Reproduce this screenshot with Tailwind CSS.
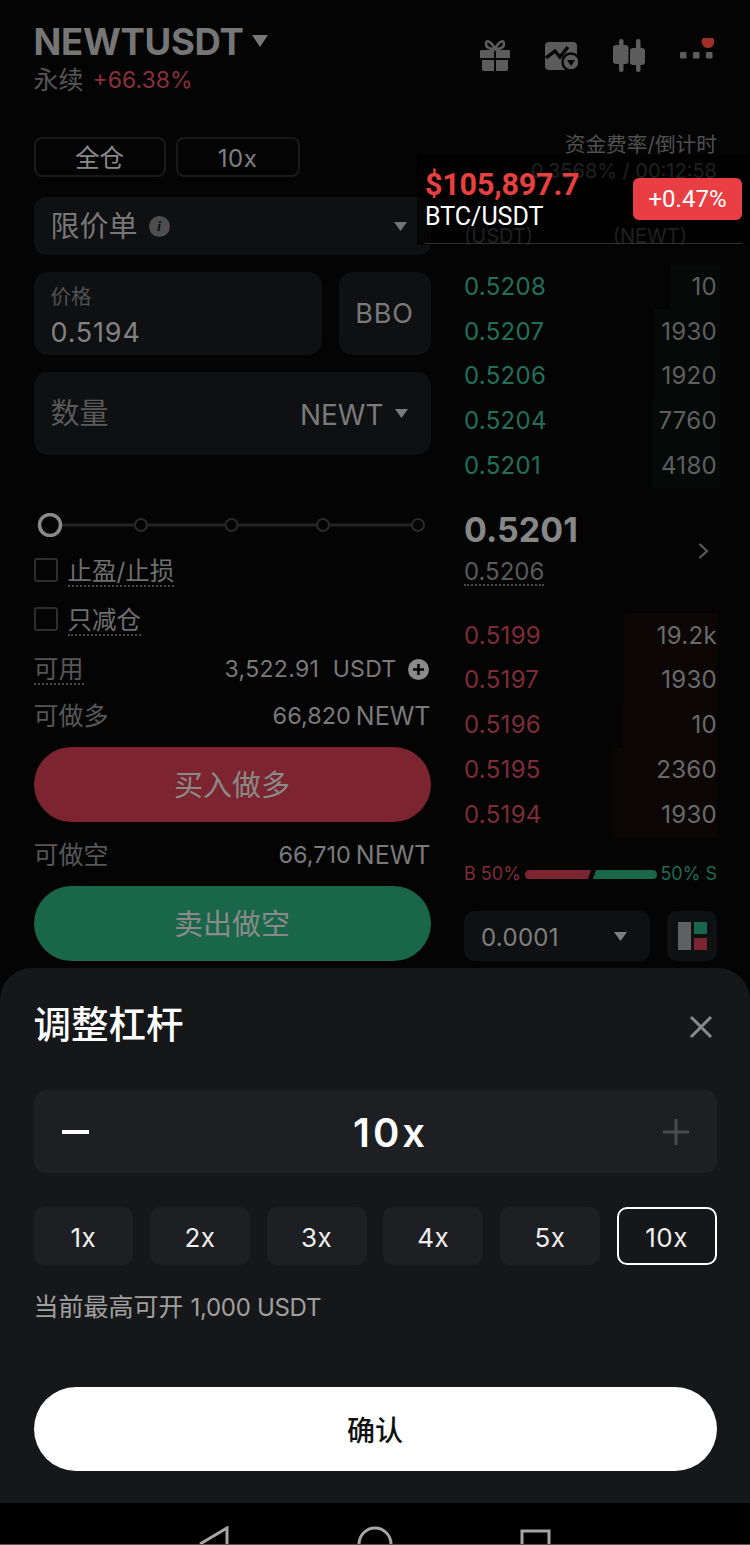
<!doctype html>
<html lang="zh">
<head>
<meta charset="utf-8">
<script src="https://cdn.jsdelivr.net/npm/@tailwindcss/browser@4"></script>
</head>
<body class="bg-black">
<div class="relative w-[750px] h-[1545px] overflow-hidden bg-[#040404] font-['Inter','Noto_Sans_CJK_SC',sans-serif] text-[24px] text-[#7f7f7f]">

  <div class="h-[968px] overflow-hidden">
    <!-- header -->
    <header class="h-[137px] pl-[33.500px] pr-[34px] flex justify-between items-start">
      <div class="pt-[22px]">
        <div class="flex items-center gap-[8px] h-[40px]">
          <span class="text-[36.500px] leading-[40px] font-bold text-[#767676] tracking-[-0.3px]">NEWTUSDT</span>
          <svg class="w-[16px] h-[12px] mb-[2px]" viewBox="0 0 16 12"><path d="M0 0H16L8 12Z" fill="#767676"/></svg>
        </div>
        <div class="flex items-center gap-[9px] h-[28px] mt-[4px]">
          <span class="text-[25px] leading-[28px] text-[#565656]">永续</span>
          <span class="text-[23px] leading-[28px] text-[#89303c]">+66.38%</span>
        </div>
      </div>
      <div class="flex items-start gap-[35px] pt-[38px]">
        <svg class="w-[30px] h-[36px]" viewBox="0 0 30 36" fill="#5c5c5c">
          <path d="M15 11C11 3 6 1 6 6C6 10 10 11 15 11C20 11 24 10 24 6C24 1 19 3 15 11Z" fill="none" stroke="#5c5c5c" stroke-width="2.6"/>
          <path d="M1 12H14V20H0V13ZM16 12H29L30 13V20H16Z"/>
          <path d="M2 22H14V33H4Q2 33 2 31ZM16 22H28V31Q28 33 26 33H16Z"/>
        </svg>
        <svg class="w-[33px] h-[36px]" viewBox="0 0 33 36">
          <rect x="0" y="4" width="32" height="28" rx="4" fill="#5c5c5c"/>
          <path d="M1 20L10 13L15 19L23 9" fill="none" stroke="#040404" stroke-width="3.400"/>
          <circle cx="26" cy="24" r="8.500" fill="#5c5c5c" stroke="#040404" stroke-width="2.500"/>
          <path d="M22 22H30L26 28Z" fill="#040404"/>
        </svg>
        <svg class="w-[32px] h-[36px]" viewBox="0 0 32 36" fill="#5c5c5c">
          <rect x="6" y="1" width="4.500" height="33" rx="2"/>
          <rect x="0" y="7" width="15.500" height="19" rx="3"/>
          <rect x="23" y="1" width="4.500" height="33" rx="2"/>
          <rect x="17" y="10" width="15" height="17" rx="3"/>
        </svg>
        <svg class="w-[36px] h-[36px]" viewBox="0 0 36 36">
          <rect x="0" y="14" width="6.500" height="6.500" rx="1" fill="#5c5c5c"/>
          <rect x="13" y="14" width="6.500" height="6.500" rx="1" fill="#5c5c5c"/>
          <rect x="26" y="14" width="6.500" height="6.500" rx="1" fill="#5c5c5c"/>
          <circle cx="28" cy="3.700" r="6.300" fill="#9e2f2a"/>
        </svg>
      </div>
    </header>

    <div class="flex pl-[33.500px]">
      <!-- left column -->
      <div class="w-[397px] flex flex-col">
        <div class="flex gap-[10px]">
          <div class="w-[132px] h-[40px] pt-[3px] rounded-[8px] border-2 border-[#191919] flex items-center justify-center text-[24.500px] text-[#8a8a8a]">全仓</div>
          <div class="w-[124px] h-[40px] pt-[3px] rounded-[8px] border-2 border-[#191919] flex items-center justify-center text-[#7f7f7f] tracking-[0.5px]">10x</div>
        </div>

        <div class="mt-[20px] h-[58px] rounded-[12px] bg-[#0f1012] pl-[17px] pr-[24px] flex items-center justify-between">
          <div class="flex items-center gap-[11px]">
            <span class="text-[29px] pt-[1px] text-[#777777]">限价单</span>
            <span class="w-[21px] h-[21px] rounded-full bg-[#4d4d4d] flex items-center justify-center text-[15px] italic font-bold font-['Liberation_Serif',serif] text-[#0f1012]">i</span>
          </div>
          <svg class="w-[13px] h-[9px]" viewBox="0 0 13 9"><path d="M0 0H13L6.500 9Z" fill="#747474"/></svg>
        </div>

        <div class="mt-[17px] flex gap-[17px]">
          <div class="w-[288px] h-[83px] rounded-[14px] bg-[#0f1012] pl-[17px] flex flex-col">
            <span class="mt-[12px] h-[26px] text-[20.500px] leading-[26px] text-[#525252]">价格</span>
            <span class="mt-[7px] h-[32px] text-[27px] leading-[32px] text-[#828282] tracking-[0.8px]">0.5194</span>
          </div>
          <div class="w-[92px] h-[83px] pt-[2px] rounded-[14px] bg-[#0f1012] flex items-center justify-center text-[27px] text-[#7a7a7a] tracking-[0.8px]">BBO</div>
        </div>

        <div class="mt-[17px] h-[83px] rounded-[14px] bg-[#0f1012] pl-[17px] pr-[23px] flex items-center justify-between">
          <span class="text-[29px] pt-[1px] text-[#5a5a5a]">数量</span>
          <div class="flex items-center gap-[11px]">
            <span class="text-[28px] pt-[3px] text-[#7a7a7a]">NEWT</span>
            <svg class="w-[13px] h-[9px]" viewBox="0 0 13 9"><path d="M0 0H13L6.500 9Z" fill="#7a7a7a"/></svg>
          </div>
        </div>

        <svg class="mt-[58px] w-[397px] h-[24px]" viewBox="0 0 397 24">
          <path d="M16 12H384" stroke="#222222" stroke-width="3"/>
          <circle cx="16" cy="12" r="10.500" fill="#040404" stroke="#8a8a8a" stroke-width="3.500"/>
          <circle cx="107" cy="12" r="6" fill="#040404" stroke="#2a2a2a" stroke-width="2"/>
          <circle cx="197.500" cy="12" r="6" fill="#040404" stroke="#2a2a2a" stroke-width="2"/>
          <circle cx="289" cy="12" r="6" fill="#040404" stroke="#2a2a2a" stroke-width="2"/>
          <circle cx="384" cy="12" r="6" fill="#040404" stroke="#2a2a2a" stroke-width="2"/>
        </svg>

        <label class="mt-[21px] h-[24px] flex items-center gap-[10px]">
          <span class="w-[24px] h-[24px] rounded-[3px] border-2 border-[#2e2e2e]"></span>
          <span class="h-[30px] mt-[3px] leading-[28px] text-[24.500px] text-[#6f6f6f] border-b-2 border-dotted border-[#474747]">止盈/止损</span>
        </label>
        <label class="mt-[25px] h-[24px] flex items-center gap-[10px]">
          <span class="w-[24px] h-[24px] rounded-[3px] border-2 border-[#2e2e2e]"></span>
          <span class="h-[30px] mt-[3px] leading-[28px] text-[24.500px] text-[#6f6f6f] border-b-2 border-dotted border-[#474747]">只减仓</span>
        </label>

        <div class="mt-[23px] h-[30px] flex items-center justify-between">
          <span class="h-[30px] mt-[2px] leading-[28px] text-[25px] text-[#575757] border-b-2 border-dotted border-[#474747]">可用</span>
          <div class="flex items-center gap-[11px] pr-[2px]">
            <span class="text-[23px] pt-[1px] text-[#7a7a7a] tracking-[0.3px]">3,522.91&nbsp;&nbsp;USDT</span>
            <span class="w-[21px] h-[21px] rounded-full bg-[#8a8a8a] flex items-center justify-center">
              <svg class="w-[13px] h-[13px]" viewBox="0 0 13 13"><path d="M6.500 1V12M1 6.500H12" stroke="#040404" stroke-width="2.600"/></svg>
            </span>
          </div>
        </div>
        <div class="mt-[17px] h-[30px] pt-[2px] flex items-center justify-between">
          <span class="text-[25px] text-[#575757]">可做多</span>
          <div class="flex gap-[5px] text-[#7a7a7a]"><span class="text-[23.500px]">66,820</span><span class="text-[25px]">NEWT</span></div>
        </div>
        <button class="mt-[16px] h-[75px] pt-[2px] rounded-full bg-[#7c2530] text-[29px] text-[#8a8a8a]">买入做多</button>
        <div class="mt-[18px] h-[30px] pt-[2px] flex items-center justify-between">
          <span class="text-[25px] text-[#575757]">可做空</span>
          <div class="flex gap-[5px] text-[#7a7a7a]"><span class="text-[23.500px]">66,710</span><span class="text-[25px]">NEWT</span></div>
        </div>
        <button class="mt-[16px] h-[75px] pt-[2px] rounded-full bg-[#19664a] text-[29px] text-[#8a8a8a]">卖出做空</button>
      </div>

      <!-- right column -->
      <div class="ml-[33.500px] w-[253px] flex flex-col">
        <div class="h-[16px] leading-[16px] text-[20.700px] text-right text-[#505050]">资金费率/倒计时</div>
        <div class="mt-[10px] h-[16px] leading-[16px] text-[20px] text-right text-[#505050]">0.3568% / 00:12:58</div>
        <div class="mt-[49px] h-[16px] leading-[16px] text-[20px] text-[#505050] flex pr-[30px] justify-between">
          <span>(USDT)</span><span>(NEWT)</span>
        </div>

        <div class="mt-[20.600px] flex flex-col tracking-[0.3px]">
          <div class="relative h-[44.750px] flex items-center justify-between"><span class="absolute right-[-3px] inset-y-0 w-[50px] bg-[#050908]"></span><span class="relative text-[#22705a]">0.5208</span><span class="relative text-[#5f5f5f]">10</span></div>
          <div class="relative h-[44.750px] flex items-center justify-between"><span class="absolute right-[-3px] inset-y-0 w-[66px] bg-[#050908]"></span><span class="relative text-[#22705a]">0.5207</span><span class="relative text-[#5f5f5f]">1930</span></div>
          <div class="relative h-[44.750px] flex items-center justify-between"><span class="absolute right-[-3px] inset-y-0 w-[66px] bg-[#050908]"></span><span class="relative text-[#22705a]">0.5206</span><span class="relative text-[#5f5f5f]">1920</span></div>
          <div class="relative h-[44.750px] flex items-center justify-between"><span class="absolute right-[-3px] inset-y-0 w-[68px] bg-[#050908]"></span><span class="relative text-[#22705a]">0.5204</span><span class="relative text-[#5f5f5f]">7760</span></div>
          <div class="relative h-[44.750px] flex items-center justify-between"><span class="absolute right-[-3px] inset-y-0 w-[68px] bg-[#050908]"></span><span class="relative text-[#22705a]">0.5201</span><span class="relative text-[#5f5f5f]">4180</span></div>
        </div>

        <div class="mt-[20px] h-[78px] flex items-center justify-between pr-[8px]">
          <div class="flex flex-col items-start">
            <span class="h-[42px] leading-[42px] text-[34px] font-bold text-[#878787]">0.5201</span>
            <span class="mt-[8px] h-[27px] leading-[26px] text-[#5a5a5a] border-b-2 border-dotted border-[#4c4c4c]">0.5206</span>
          </div>
          <svg class="w-[11px] h-[16px] mt-[8px]" viewBox="0 0 11 16"><path d="M1.500 1L9 8L1.500 15" fill="none" stroke="#5a5a5a" stroke-width="2.200"/></svg>
        </div>

        <div class="mt-[27px] flex flex-col tracking-[0.3px]">
          <div class="relative h-[44.750px] flex items-center justify-between"><span class="absolute right-0 inset-y-0 w-[92px] bg-[#0c0606]"></span><span class="relative text-[#7f2c38]">0.5199</span><span class="relative text-[#6a6a6a]">19.2k</span></div>
          <div class="relative h-[44.750px] flex items-center justify-between"><span class="absolute right-0 inset-y-0 w-[92px] bg-[#0c0606]"></span><span class="relative text-[#7f2c38]">0.5197</span><span class="relative text-[#6a6a6a]">1930</span></div>
          <div class="relative h-[44.750px] flex items-center justify-between"><span class="absolute right-0 inset-y-0 w-[95px] bg-[#0c0606]"></span><span class="relative text-[#7f2c38]">0.5196</span><span class="relative text-[#6a6a6a]">10</span></div>
          <div class="relative h-[44.750px] flex items-center justify-between"><span class="absolute right-0 inset-y-0 w-[104px] bg-[#0c0606]"></span><span class="relative text-[#7f2c38]">0.5195</span><span class="relative text-[#6a6a6a]">2360</span></div>
          <div class="relative h-[44.750px] flex items-center justify-between"><span class="absolute right-0 inset-y-0 w-[104px] bg-[#0c0606]"></span><span class="relative text-[#7f2c38]">0.5194</span><span class="relative text-[#6a6a6a]">1930</span></div>
        </div>

        <div class="mt-[27.200px] h-[20px] flex items-center justify-between text-[18px] leading-[20px]">
          <span class="text-[#7f2c38]">B 50%</span>
          <svg class="w-[132px] h-[9px]" viewBox="0 0 132 9">
            <path d="M4.500 0H66L63 9H4.500Q0 9 0 4.500T4.500 0Z" fill="#7c2530"/>
            <path d="M71 0H127.500Q132 0 132 4.500T127.500 9H68Z" fill="#19664a"/>
          </svg>
          <span class="text-[#1f6a52]">50% S</span>
        </div>

        <div class="mt-[27px] flex justify-between">
          <div class="w-[186px] h-[50px] rounded-[10px] bg-[#0f1012] pl-[17px] pr-[23px] flex items-center justify-between">
            <span class="pt-[3px] text-[#7f7f7f] tracking-[0.3px]">0.0001</span>
            <svg class="w-[13px] h-[9px]" viewBox="0 0 13 9"><path d="M0 0H13L6.500 9Z" fill="#7f7f7f"/></svg>
          </div>
          <div class="w-[50px] h-[50px] rounded-[10px] bg-[#0f1012] flex items-center justify-center">
            <svg class="w-[29px] h-[28px]" viewBox="0 0 29 28">
              <rect x="0" y="0" width="13" height="28" fill="#5f6063"/>
              <rect x="16" y="0" width="13" height="12" fill="#19664a"/>
              <rect x="16" y="16" width="13" height="12" fill="#7c2530"/>
            </svg>
          </div>
        </div>
      </div>
    </div>
  </div>

  <!-- leverage sheet -->
  <section class="h-[535px] rounded-t-[32px] bg-[#161719] px-[33.500px] flex flex-col">
    <div class="mt-[33px] h-[48px] flex items-center justify-between">
      <h2 class="text-[37.500px] leading-[48px] font-medium text-white">调整杠杆</h2>
      <svg class="w-[24px] h-[24px] mr-[4px] mt-[3px]" viewBox="0 0 24 24"><path d="M2 2L22 22M22 2L2 22" stroke="#8a8a8a" stroke-width="3"/></svg>
    </div>
    <div class="mt-[41px] h-[83px] rounded-[12px] bg-[#1e1f22] px-[28px] flex items-center justify-between">
      <svg class="w-[27px] h-[4px]" viewBox="0 0 27 4"><rect width="27" height="4" fill="#ffffff"/></svg>
      <span class="ml-[30px] pt-[2px] text-[40px] font-semibold text-white tracking-[3px]">10x</span>
      <svg class="w-[26px] h-[26px]" viewBox="0 0 26 26"><path d="M13 0V26M0 13H26" stroke="#4a4b4e" stroke-width="3"/></svg>
    </div>
    <div class="mt-[34px] grid grid-cols-6 gap-[16.800px]">
      <div class="h-[58px] pt-[2px] rounded-[10px] bg-[#1e1f22] flex items-center justify-center text-[26px] tracking-[0.5px] text-[#eeeeee]">1x</div>
      <div class="h-[58px] pt-[2px] rounded-[10px] bg-[#1e1f22] flex items-center justify-center text-[26px] tracking-[0.5px] text-[#eeeeee]">2x</div>
      <div class="h-[58px] pt-[2px] rounded-[10px] bg-[#1e1f22] flex items-center justify-center text-[26px] tracking-[0.5px] text-[#eeeeee]">3x</div>
      <div class="h-[58px] pt-[2px] rounded-[10px] bg-[#1e1f22] flex items-center justify-center text-[26px] tracking-[0.5px] text-[#eeeeee]">4x</div>
      <div class="h-[58px] pt-[2px] rounded-[10px] bg-[#1e1f22] flex items-center justify-center text-[26px] tracking-[0.5px] text-[#eeeeee]">5x</div>
      <div class="h-[58px] pt-[2px] rounded-[10px] bg-[#161719] border-2 border-white flex items-center justify-center text-[26px] tracking-[0.5px] text-[#eeeeee]">10x</div>
    </div>
    <div class="mt-[27px] h-[30px] leading-[30px] text-[25px] text-[#a0a0a0]">当前最高可开<span class="ml-[7px] text-[24px] tracking-[-0.3px]">1,000&nbsp;USDT</span></div>
    <button class="mt-[65px] h-[84px] pt-[3px] rounded-full bg-white text-[28px] font-medium text-[#111111]">确认</button>
  </section>

  <!-- system nav -->
  <nav class="h-[42px] bg-black border-b border-[#555555] flex justify-center items-end gap-[127px]">
    <svg class="w-[31px] h-[18px]" viewBox="0 0 31 18"><path d="M1 18L28 2V18" fill="none" stroke="#a6a6a6" stroke-width="3"/></svg>
    <svg class="w-[36px] h-[18px]" viewBox="0 0 36 18"><path d="M2 18A16 16 0 0 1 34 18" fill="none" stroke="#a6a6a6" stroke-width="3"/></svg>
    <svg class="w-[31px] h-[15px]" viewBox="0 0 31 15"><path d="M2 15V2H29V15" fill="none" stroke="#a6a6a6" stroke-width="3"/></svg>
  </nav>

  <!-- floating price ticker overlay -->
  <aside class="absolute left-[417px] top-[155px] w-[333px] h-[90px] bg-black/60 pl-[8px] pr-[8px]">
    <div class="flex items-center justify-between h-[89px] border-b border-[#333333]">
      <div class="flex flex-col">
        <span class="text-[30.500px] leading-[36px] font-bold text-[#e83f3f] tracking-[-0.2px] font-['Roboto',sans-serif]">$105,897.7</span>
        <span class="text-[25px] leading-[28px] text-white font-['Roboto',sans-serif]">BTC/USDT</span>
      </div>
      <span class="w-[109px] h-[42px] rounded-[6px] bg-[#e93f44] flex items-center justify-center text-[24px] text-white font-['Roboto',sans-serif]">+0.47%</span>
    </div>
  </aside>
</div>
</body>
</html>
